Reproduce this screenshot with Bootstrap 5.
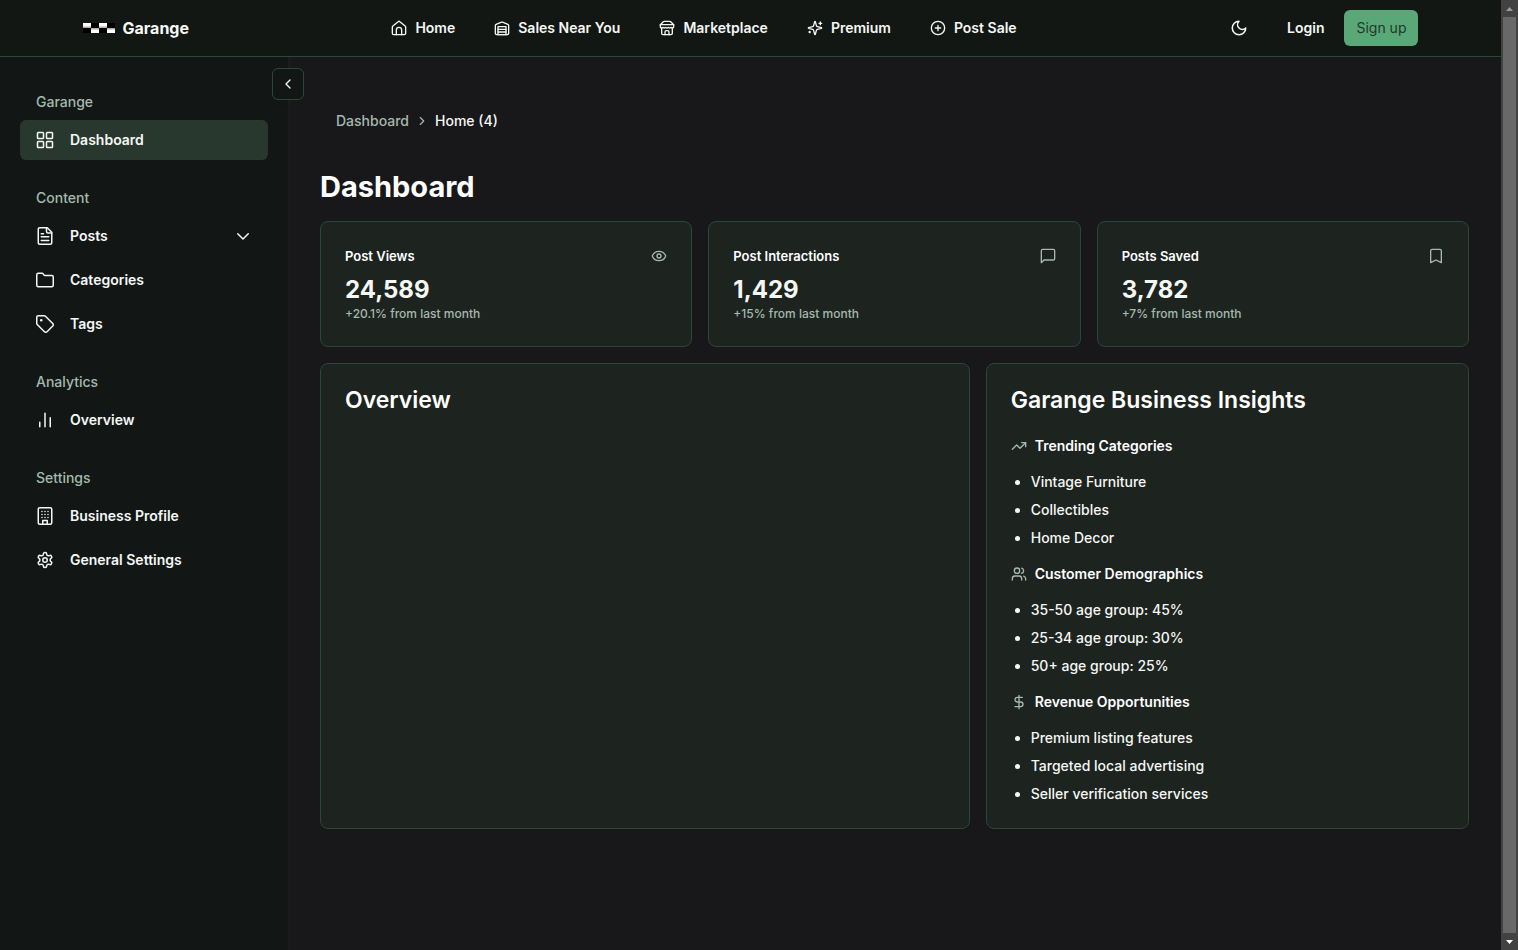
<!DOCTYPE html>
<html lang="en" data-bs-theme="dark">
<head>
<meta charset="utf-8">
<meta name="viewport" content="width=device-width, initial-scale=1">
<title>Garange – Dashboard</title>
<link href="https://cdn.jsdelivr.net/npm/bootstrap@5.3.0/dist/css/bootstrap.min.css" rel="stylesheet">
<style>
:root { --line: #2a4738; --muted: #a5b9ae; --ink: #f5f7f5; --panel: #1d231f; --side: #121715; }
body { font-family: Inter, sans-serif; font-size: 14px; line-height: 20px; font-weight: 500; color: var(--ink); background: #18181a; }
svg { fill: none; stroke: currentColor; stroke-width: 2; stroke-linecap: round; stroke-linejoin: round; flex: none; display: block; width: 16px; height: 16px; }
a { color: inherit; text-decoration: none; }
.topbar { background: #131713; border-bottom: 1px solid var(--line); }
.topbar-inner { max-width: 1400px; height: 56px; padding: 0 32px; font-weight: 600; }
.brand-name { font-size: 16px; font-weight: 700; }
.brand svg { width: 32px; height: 10px; stroke: none; }
.main-links { gap: 39px; }
.icon-btn { width: 40px; height: 36px; color: inherit; }
.icon-btn svg, .side-link svg { width: 18px; height: 18px; }
.signup { background: #5aa878; color: #1b3a29; font-size: 14px; line-height: 20px; padding: 8px 12px; border: 0; border-radius: 6px; }
.signup:hover { background: #4d9a6a; }
.sidebar { width: 291px; background: var(--side); border-right: 3px solid #1b1b1d; padding: 27px 20px; gap: 20px; }
.side-label { color: var(--muted); padding: 8px 16px; }
.side-link { height: 40px; padding: 0 16px; gap: 16px; border-radius: 6px; font-weight: 600; color: inherit; border: 0; background: none; }
.side-link:hover, .side-link.active { background: #28382f; }
.side-list { gap: 4px; }
.side-link .chev { width: 18px; height: 18px; }
.collapse-btn { top: 11px; right: -16px; width: 32px; height: 32px; background: var(--side); border: 1px solid var(--line); border-radius: 6px; color: inherit; }
.content { padding: 54px 32px 32px 29px; }
.crumbs { padding-left: 16px; gap: 4px; margin-bottom: 36px; }
.crumbs svg { width: 14px; height: 14px; margin: 0 2px; }
.soft { color: var(--muted); }
h1 { font-size: 29px; line-height: 40px; font-weight: 700; margin: 0 0 14px; }
.panel { background: var(--panel); border: 1px solid var(--line); border-radius: 8px; padding: 24px; }
.panel h2 { font-size: 23px; line-height: 24px; font-weight: 600; margin: 0 0 24px; }
.panel h3 { font-size: 14px; line-height: 20px; font-weight: 600; margin: 0; }
.panel .stat-title { font-size: 13px; }
.stat { font-size: 24px; line-height: 32px; font-weight: 700; margin: 8px 0 0; }
.stat-note { font-size: 12px; line-height: 16px; font-weight: 500; color: var(--muted); margin: 0; }
.lower { display: grid; grid-template-columns: repeat(7, 1fr); gap: 16px; }
.span-four { grid-column: span 4; }
.span-three { grid-column: span 3; }
.insights { gap: 16px; }
.insights ul { padding-left: 20px; margin: 0; display: grid; gap: 8px; }
.scrollbar { width: 17px; height: 100vh; top: 0; background: #424242; }
.scrollbar svg { width: 17px; height: 17px; stroke: none; fill: #9a9a9a; }
.thumb { background: #686868; margin: 0 2px; }
</style>
</head>
<body>
<div class="d-flex min-vh-100">
  <div class="flex-grow-1 d-flex flex-column">
    <header class="topbar">
      <div class="topbar-inner d-flex align-items-center justify-content-between mx-auto">
        <a href="#" class="brand d-flex align-items-center gap-2">
          <svg viewBox="0 0 32 10"><defs><linearGradient id="cellTop" x1="0" y1="0" x2="0" y2="1"><stop offset=".5" stop-color="#fff"/><stop offset="1" stop-color="#999"/></linearGradient><linearGradient id="cellLow" x1="0" y1="0" x2="0" y2="1"><stop offset="0" stop-color="#999"/><stop offset=".5" stop-color="#fff"/></linearGradient></defs><path fill="#000" d="M0 0h32v10H0z"/><path fill="url(#cellTop)" d="M0 0h8v5H0zM16 0h8v5h-8z"/><path fill="url(#cellLow)" d="M8 5h8v5H8zM24 5h8v5h-8z"/></svg>
          <span class="brand-name">Garange</span>
        </a>
        <nav class="main-links d-flex">
          <a href="#" class="d-flex align-items-center gap-2"><svg viewBox="0 0 24 24"><path d="M2 10.500a2 2 0 0 1 .8-1.600l7.900-6.400a2 2 0 0 1 2.600 0l7.900 6.400a2 2 0 0 1 .8 1.600V20a2 2 0 0 1-2 2H4a2 2 0 0 1-2-2z"/><path d="M8 22v-7a4 4 0 0 1 8 0v7"/></svg>Home</a>
          <a href="#" class="d-flex align-items-center gap-2"><svg viewBox="0 0 24 24"><path d="M22 8.350V20a2 2 0 0 1-2 2H4a2 2 0 0 1-2-2V8.350A2 2 0 0 1 3.260 6.500l8-3.200a2 2 0 0 1 1.480 0l8 3.200A2 2 0 0 1 22 8.350ZM6 18h12M6 14h12"/><path d="M6 22V10h12v12z"/></svg>Sales Near You</a>
          <a href="#" class="d-flex align-items-center gap-2"><svg viewBox="0 0 24 24"><path d="m2 7 4.410-4.410A2 2 0 0 1 7.830 2h8.340a2 2 0 0 1 1.420.59L22 7M4 12v8a2 2 0 0 0 2 2h12a2 2 0 0 0 2-2v-8"/><path d="M15 22v-4a2 2 0 0 0-2-2h-2a2 2 0 0 0-2 2v4M2 7h20v3a2 2 0 0 1-2 2 2.700 2.700 0 0 1-1.590-.63.7.7 0 0 0-.82 0 2.700 2.700 0 0 1-3.180 0 .7.7 0 0 0-.82 0 2.700 2.700 0 0 1-3.180 0 .7.7 0 0 0-.82 0 2.700 2.700 0 0 1-3.180 0 .7.7 0 0 0-.82 0A2.700 2.700 0 0 1 4 12a2 2 0 0 1-2-2z"/></svg>Marketplace</a>
          <a href="#" class="d-flex align-items-center gap-2"><svg viewBox="0 0 24 24"><path d="M9.937 15.500A2 2 0 0 0 8.500 14.063l-6.135-1.582a.5.5 0 0 1 0-.962L8.500 9.936A2 2 0 0 0 9.937 8.500l1.582-6.135a.5.5 0 0 1 .963 0L14.063 8.500A2 2 0 0 0 15.500 9.937l6.135 1.581a.5.5 0 0 1 0 .964L15.500 14.063a2 2 0 0 0-1.437 1.437l-1.582 6.135a.5.5 0 0 1-.963 0z"/><path d="M20 3v4M22 5h-4M4 17v2M5 18H3"/></svg>Premium</a>
          <a href="#" class="d-flex align-items-center gap-2"><svg viewBox="0 0 24 24"><circle cx="12" cy="12" r="10"/><path d="M8 12h8M12 8v8"/></svg>Post Sale</a>
        </nav>
        <div class="d-flex align-items-center gap-3">
          <button type="button" class="icon-btn btn p-0 border-0 d-flex align-items-center justify-content-center" aria-label="Toggle theme"><svg viewBox="0 0 24 24"><path d="M12 3a6 6 0 0 0 9 9 9 9 0 1 1-9-9Z"/></svg></button>
          <div class="d-flex align-items-center gap-2"><a href="#" class="px-2 mx-1">Login</a><button type="button" class="btn signup">Sign up</button></div>
        </div>
      </div>
    </header>
    <div class="d-flex flex-grow-1">
      <aside class="sidebar position-relative d-flex flex-column flex-shrink-0">
        <button type="button" class="collapse-btn position-absolute p-0 d-flex align-items-center justify-content-center" aria-label="Collapse sidebar"><svg viewBox="0 0 24 24"><path d="m15 18-6-6 6-6"/></svg></button>
        <section><div class="side-label">Garange</div>
          <nav class="side-list d-flex flex-column">
            <a href="#" class="side-link active d-flex align-items-center"><svg viewBox="0 0 24 24"><rect x="2" y="2" width="8" height="8" rx="1"/><rect x="14" y="2" width="8" height="8" rx="1"/><rect x="2" y="14" width="8" height="8" rx="1"/><rect x="14" y="14" width="8" height="8" rx="1"/></svg>Dashboard</a>
          </nav></section>
        <section><div class="side-label">Content</div>
          <nav class="side-list d-flex flex-column">
            <button type="button" class="side-link d-flex align-items-center"><svg viewBox="0 0 24 24"><path d="M15 1H5a2 2 0 0 0-2 2v18a2 2 0 0 0 2 2h14a2 2 0 0 0 2-2V7Z"/><path d="M14 1v5a2 2 0 0 0 2 2h5M10 9H7M17 13H7M17 18H7"/></svg>Posts<svg class="chev ms-auto" viewBox="0 0 24 24"><path d="m5 9 7 7 7-7"/></svg></button>
            <a href="#" class="side-link d-flex align-items-center"><svg viewBox="0 0 24 24"><path d="M21 21a2 2 0 0 0 2-2V8a2 2 0 0 0-2-2h-8.900a2 2 0 0 1-1.700-.9L9.600 3.900A2 2 0 0 0 7.900 3H3a2 2 0 0 0-2 2v14a2 2 0 0 0 2 2Z"/></svg>Categories</a>
            <a href="#" class="side-link d-flex align-items-center"><svg viewBox="0 0 24 24"><path d="M12.600 1.600A2 2 0 0 0 11.200 1H3a2 2 0 0 0-2 2v8.200a2 2 0 0 0 .6 1.400l9.700 9.700a2.400 2.400 0 0 0 3.400 0l7.600-7.600a2.400 2.400 0 0 0 0-3.400z"/><circle cx="7" cy="7" r=".8" fill="currentColor"/></svg>Tags</a>
          </nav></section>
        <section><div class="side-label">Analytics</div>
          <nav class="side-list d-flex flex-column">
            <a href="#" class="side-link d-flex align-items-center"><svg viewBox="0 0 24 24"><path d="M5 21v-6M12 21V3M19 21V9"/></svg>Overview</a>
          </nav></section>
        <section><div class="side-label">Settings</div>
          <nav class="side-list d-flex flex-column">
            <a href="#" class="side-link d-flex align-items-center"><svg viewBox="0 0 24 24"><rect x="3" y="1" width="18" height="22" rx="2"/><path d="M9 22v-4h6v4M8 6h.01M16 6h.01M12 6h.01M12 10h.01M12 14h.01M16 10h.01M16 14h.01M8 10h.01M8 14h.01"/></svg>Business Profile</a>
            <a href="#" class="side-link d-flex align-items-center"><svg viewBox="0 0 24 24"><path d="M12.220 2h-.44a2 2 0 0 0-2 2v.18a2 2 0 0 1-1 1.730l-.43.25a2 2 0 0 1-2 0l-.15-.08a2 2 0 0 0-2.730.73l-.22.38a2 2 0 0 0 .73 2.730l.15.1a2 2 0 0 1 1 1.720v.51a2 2 0 0 1-1 1.740l-.15.09a2 2 0 0 0-.73 2.730l.22.38a2 2 0 0 0 2.730.73l.15-.08a2 2 0 0 1 2 0l.43.25a2 2 0 0 1 1 1.730V20a2 2 0 0 0 2 2h.44a2 2 0 0 0 2-2v-.18a2 2 0 0 1 1-1.730l.43-.25a2 2 0 0 1 2 0l.15.08a2 2 0 0 0 2.730-.73l.22-.39a2 2 0 0 0-.73-2.730l-.15-.08a2 2 0 0 1-1-1.740v-.5a2 2 0 0 1 1-1.740l.15-.09a2 2 0 0 0 .73-2.730l-.22-.38a2 2 0 0 0-2.730-.73l-.15.08a2 2 0 0 1-2 0l-.43-.25a2 2 0 0 1-1-1.730V4a2 2 0 0 0-2-2z"/><circle cx="12" cy="12" r="3"/></svg>General Settings</a>
          </nav></section>
      </aside>
      <main class="content flex-grow-1">
        <nav class="crumbs d-flex align-items-center" aria-label="Breadcrumb">
          <a href="#" class="soft">Dashboard</a><svg class="soft" viewBox="0 0 24 24"><path d="m9 18 6-6-6-6"/></svg><span>Home (4)</span>
        </nav>
        <h1>Dashboard</h1>
        <div class="row row-cols-3 g-3 mb-3">
          <div class="col"><section class="panel">
            <div class="d-flex align-items-center justify-content-between"><h3 class="stat-title">Post Views</h3><svg class="soft" viewBox="0 0 24 24"><path d="M2.060 12.350a1 1 0 0 1 0-.7 10.750 10.750 0 0 1 19.880 0 1 1 0 0 1 0 .7 10.750 10.750 0 0 1-19.880 0"/><circle cx="12" cy="12" r="3"/></svg></div>
            <p class="stat">24,589</p><p class="stat-note">+20.1% from last month</p></section></div>
          <div class="col"><section class="panel">
            <div class="d-flex align-items-center justify-content-between"><h3 class="stat-title">Post Interactions</h3><svg class="soft" viewBox="0 0 24 24"><path d="M22 16a2 2 0 0 1-2 2H6l-4 4V4a2 2 0 0 1 2-2h16a2 2 0 0 1 2 2z"/></svg></div>
            <p class="stat">1,429</p><p class="stat-note">+15% from last month</p></section></div>
          <div class="col"><section class="panel">
            <div class="d-flex align-items-center justify-content-between"><h3 class="stat-title">Posts Saved</h3><svg class="soft" viewBox="0 0 24 24"><path d="m20 22-8-4-8 4V4a2 2 0 0 1 2-2h12a2 2 0 0 1 2 2z"/></svg></div>
            <p class="stat">3,782</p><p class="stat-note">+7% from last month</p></section></div>
        </div>
        <div class="lower">
          <section class="panel span-four"><h2>Overview</h2></section>
          <section class="panel span-three"><h2>Garange Business Insights</h2>
            <div class="insights d-flex flex-column">
              <div class="d-flex align-items-center gap-2"><svg class="soft" viewBox="0 0 24 24"><path d="m22 7-8.500 8.500-5-5L2 17"/><path d="M16 7h6v6"/></svg><h3>Trending Categories</h3></div>
              <ul><li>Vintage Furniture</li><li>Collectibles</li><li>Home Decor</li></ul>
              <div class="d-flex align-items-center gap-2"><svg class="soft" viewBox="0 0 24 24"><path d="M16 21v-2a4 4 0 0 0-4-4H6a4 4 0 0 0-4 4v2"/><circle cx="9" cy="7" r="4"/><path d="M22 21v-2a4 4 0 0 0-3-3.870M16 3.130a4 4 0 0 1 0 7.750"/></svg><h3>Customer Demographics</h3></div>
              <ul><li>35-50 age group: 45%</li><li>25-34 age group: 30%</li><li>50+ age group: 25%</li></ul>
              <div class="d-flex align-items-center gap-2"><svg class="soft" viewBox="0 0 24 24"><path d="M12 2v20M17 5H9.500a3.500 3.500 0 0 0 0 7h5a3.500 3.500 0 0 1 0 7H6"/></svg><h3>Revenue Opportunities</h3></div>
              <ul><li>Premium listing features</li><li>Targeted local advertising</li><li>Seller verification services</li></ul>
            </div>
          </section>
        </div>
      </main>
    </div>
  </div>
  <div class="scrollbar position-sticky d-flex flex-column flex-shrink-0" aria-hidden="true">
    <svg viewBox="0 0 17 17"><path d="M5 11h7L8.500 7z"/></svg>
    <div class="thumb flex-grow-1"></div>
    <svg viewBox="0 0 17 17"><path fill="#fff" d="M5 7h7l-3.500 4z"/></svg>
  </div>
</div>
<script src="https://cdn.jsdelivr.net/npm/bootstrap@5.3.0/dist/js/bootstrap.bundle.min.js"></script>
</body>
</html>
